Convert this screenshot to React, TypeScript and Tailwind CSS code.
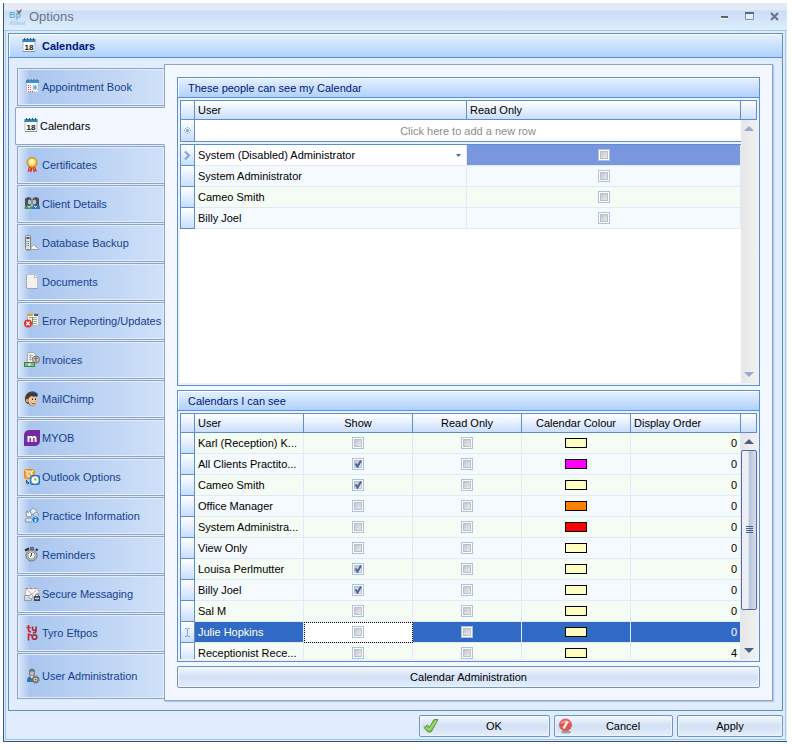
import { useState } from 'react'
import type { ReactNode } from 'react'

const CalendarIcon = () => (
  <svg width="16" height="16" viewBox="0 0 16 16" className="shrink-0">
    <rect x="1" y="1.500" width="12" height="12" rx="1" fill="#fafafa" stroke="#b9bcc2" />
    <rect x=".5" y="1" width="13" height="3" fill="#2d86c6" />
    <path d="M2.500 0v2M5.500 0v2M8.500 0v2M11.500 0v2" stroke="#4b4b50" />
    <text x="7" y="11.500" textAnchor="middle" fontSize="8" fontWeight="700" fontFamily="Liberation Sans, sans-serif" fill="#111">18</text>
    <path d="M1 13.500h12" stroke="#8b8e94" />
  </svg>
)

const AppointmentIcon = () => (
  <svg width="16" height="16" viewBox="0 0 16 16" className="shrink-0">
    <rect x="2.500" y="1.500" width="12" height="12" rx="1" fill="#f4f7fb" stroke="#b5bfce" />
    <rect x="2" y="1" width="13" height="3" fill="#3a92cf" />
    <path d="M4 0v2M7 0v2M10 0v2M13 0v2" stroke="#5a6470" />
    <path d="M4 6.500h1M4 8.500h1M4 10.500h1M6 12.500h1M8 12.500h1" stroke="#d23535" />
    <path d="M6 6.500h1M6 8.500h1M6 10.500h1M4 12.500h1" stroke="#e06b6b" />
    <path d="M9 6.500h5M9 10.500h5M10 12.500h4" stroke="#b4c4da" strokeDasharray="1 1" />
    <circle cx="11" cy="8.500" r="2" fill="#6aaee6" />
  </svg>
)

const CertificateIcon = () => (
  <svg width="16" height="16" viewBox="0 0 16 16" className="shrink-0">
    <path d="M5 9 3.500 15l2.500-1 1 2 1.500-5 1.500 5 1-2 2 1L11 9z" fill="#d8322b" />
    <path d="m6 11-.5 2M10 11l.5 2" stroke="#f58a7a" />
    <circle cx="8" cy="5.500" r="5" fill="#f3b21d" stroke="#c98a1c" />
    <circle cx="8" cy="5" r="3.500" fill="#fde68a" />
    <circle cx="7.500" cy="4.500" r="1.800" fill="#fff7cf" />
  </svg>
)

const ClientsIcon = () => (
  <svg width="16" height="16" viewBox="0 0 16 16" className="shrink-0">
    <path d="M.5 13c0-4 2-5 4-5s3.500 1 3.500 5z" fill="#3d9c5a" />
    <path d="M8 13c0-4 1.500-5 4-5s4 1 4 5z" fill="#2778bd" />
    <path d="M1 3c1-2.500 6-2.500 6.500 0v4c0 4-6.500 5-6.500 1z" fill="#4b4e52" />
    <path d="M8.500 3c1-2.500 6-2.500 6.500 0v5c-.5 4-6.500 3-6.500-1z" fill="#4b4e52" />
    <ellipse cx="5.500" cy="6" rx="1.700" ry="2.500" fill="#b9c4ca" />
    <ellipse cx="10.500" cy="6" rx="1.700" ry="2.500" fill="#b9c4ca" />
    <path d="m3.500 9.500 1.500 2 1.500-2M10 9.500l1.500 2 1.500-2" stroke="#e9f3f7" fill="none" />
  </svg>
)

const BackupIcon = () => (
  <svg width="16" height="16" viewBox="0 0 16 16" className="shrink-0">
    <path d="M7 11.500h6l1.500 2.500v.5H7z" fill="#f3f3f3" stroke="#9b9fa6" />
    <path d="m7 12.500 3-3 2 3" fill="#fff" stroke="#a5a7aa" />
    <rect x="1.500" y=".5" width="5" height="14" rx="1" fill="#e1e2dd" stroke="#7f827e" />
    <path d="M2.500 3h3" stroke="#555" strokeWidth="2" />
    <path d="M2.500 6.500h3M2.500 8.500h3M2.500 10.500h3" stroke="#767a77" strokeDasharray="1 .5" />
    <path d="M2 15h5" stroke="#8d8f90" />
  </svg>
)

const DocumentIcon = () => (
  <svg width="16" height="16" viewBox="0 0 16 16" className="shrink-0">
    <path d="M2.500.5h8l3 3v11h-11z" fill="#f1f1ef" stroke="#c3c4c6" />
    <path d="M10.500.5v3h3" fill="#fff" stroke="#b4b6b8" />
    <path d="M2.500 1v13" stroke="#8a8c90" strokeDasharray="1 1" />
    <path d="M3 14.500h11" stroke="#a2a4a7" />
  </svg>
)

const ErrorIcon = () => (
  <svg width="16" height="16" viewBox="0 0 16 16" className="shrink-0">
    <rect x="3.500" y=".5" width="11" height="12" fill="#f8f6ee" stroke="#bdb9ac" />
    <path d="M4 2h5" stroke="#e79a3c" strokeWidth="2" />
    <path d="M10 2h4" stroke="#355e8f" strokeWidth="2" />
    <path d="M5 4.500h8M9 6.500h4M9 8.500h4M9 10.500h4" stroke="#a6a8a6" />
    <path d="M8.500 4v8" stroke="#5b9a58" />
    <circle cx="4" cy="10.500" r="4" fill="#d8372f" />
    <path d="m2.300 8.800 3.400 3.400M5.700 8.800l-3.400 3.400" stroke="#fff" strokeWidth="1.300" />
  </svg>
)

const InvoiceIcon = () => (
  <svg width="16" height="16" viewBox="0 0 16 16" className="shrink-0">
    <path d="M3.500.5h6l2 2v9h-8z" fill="#f5f5f3" stroke="#a9abae" />
    <path d="M5 3.500h4M5 5.500h4M5 7.500h4M6.500 2v7" stroke="#b1b3b5" />
    <circle cx="12" cy="7.500" r="3.500" fill="#c6c1bb" stroke="#77716c" />
    <path d="M12 5v5M10.500 6.500h3" stroke="#7b5f5a" />
    <rect x=".5" y="10.500" width="10" height="4" fill="#83bd7e" stroke="#3f8446" />
    <circle cx="5.500" cy="12.500" r="1.200" fill="#e3f3df" />
  </svg>
)

const MailChimpIcon = () => (
  <svg width="16" height="16" viewBox="0 0 16 16" className="shrink-0">
    <path d="M1 8c0-4 3-7.500 7-7.500 3 0 5 2 5 4l-1 8c-1 3.500-5 3.500-7 .5-3 0-4-3-4-5z" fill="#5d3620" />
    <path d="M5 7c1-2 4-2 5-1 2-1 3.500 0 3 2l-.5 4c-1 3.500-5 4-7 1-1.500-2-1.500-4-.5-6z" fill="#efc79b" />
    <path d="M5 3C7-.5 11-.5 14 3l-1 2.500c-3-2-5-2-8 0z" fill="#2d5583" />
    <path d="M4.500 4.500c3-2 6-2 9 .5" stroke="#17202c" fill="none" />
    <circle cx="3.500" cy="9.500" r="1.700" fill="#dca574" />
    <path d="M8.500 7.500V9M11.500 7.500V9" stroke="#26150c" />
    <path d="M7.500 12c2 1.500 3 1 4 0" stroke="#7c4023" fill="none" />
  </svg>
)

const MyobIcon = () => (
  <svg width="16" height="16" viewBox="0 0 16 16" className="shrink-0">
    <path d="M6 0h10v10c0 4-2 6-6 6H0V6c0-4 2-6 6-6z" fill="#762a9f" />
    <text x="8" y="11.500" textAnchor="middle" fontSize="10" fontWeight="700" fontFamily="DejaVu Sans, sans-serif" fill="#fff">m</text>
  </svg>
)

const OutlookIcon = () => (
  <svg width="16" height="16" viewBox="0 0 16 16" className="shrink-0">
    <rect x=".5" y=".5" width="10" height="9" rx="1" fill="#f3a63c" stroke="#e08b1d" />
    <circle cx="5.500" cy="5" r="2.500" fill="#f6b95f" stroke="#fff" />
    <path d="m1 1 3 2.500M10 1 7 3.500" stroke="#fff" />
    <rect x="6.500" y="6.500" width="9" height="9" rx="1" fill="#3f98dd" stroke="#2374b8" />
    <circle cx="11" cy="11" r="3.200" fill="#fbf2c9" stroke="#fff" />
    <path d="M11 9v2h1.500" stroke="#a8833a" fill="none" />
    <path d="M2.500 11v3H5M3.500 12.500 5 14l-1.500 1.500" stroke="#3d444d" fill="none" />
  </svg>
)

const PracticeIcon = () => (
  <svg width="16" height="16" viewBox="0 0 16 16" className="shrink-0">
    <path d="M1 13c1-3 2-3 4-3l5 1v3H2z" fill="#d9e2ec" stroke="#7d92ac" />
    <circle cx="5" cy="6" r="3" fill="#edf2f7" stroke="#8496ad" />
    <circle cx="9.500" cy="3.500" r="3" fill="#e6edf4" stroke="#8496ad" />
    <circle cx="12" cy="7" r="2.500" fill="#d3deea" stroke="#8496ad" />
    <path d="m2 3 3 2M6 9l3-3" stroke="#8598ae" />
    <circle cx="11.500" cy="11.500" r="3.800" fill="#2779cc" stroke="#bcd8f4" />
    <path d="M11.500 9v1M11.500 11v3" stroke="#fff" strokeWidth="1.500" />
  </svg>
)

const ReminderIcon = () => (
  <svg width="16" height="16" viewBox="0 0 16 16" className="shrink-0">
    <path d="M6.500.5h3v2h-3z" fill="#8f9295" stroke="#55585b" />
    <path d="m1 3.500 4-2M12 2l1.500 1.500" stroke="#26282a" strokeWidth="2" />
    <circle cx="7.500" cy="8.500" r="5.500" fill="#c3c6c8" stroke="#6a6d70" />
    <circle cx="7.500" cy="8.500" r="3.700" fill="#eef0f0" stroke="#8f9295" />
    <path d="M7.500 6v2.500L6 9.500" stroke="#3c3e40" fill="none" />
  </svg>
)

const SecureIcon = () => (
  <svg width="16" height="16" viewBox="0 0 16 16" className="shrink-0">
    <rect x="1.500" y="2.500" width="13" height="9" fill="#f5f5f5" stroke="#b4b9c0" />
    <path d="M2 2.500h12" stroke="#df6c61" strokeDasharray="2 2" />
    <path d="m2 3 6 5 6-5" stroke="#b7bbc1" fill="none" />
    <path d="M.5 9.500h5l2 2v3h-7z" fill="#d5dae0" stroke="#929aa5" />
    <circle cx="7" cy="10.500" r="2" fill="#f1f1f1" stroke="#9d9fa4" />
    <path d="M11.500 11V9.500c0-2 3-2 3 0V11" stroke="#44484e" fill="none" />
    <rect x="10.500" y="10.500" width="5" height="4" fill="#61656c" stroke="#3f4349" />
    <path d="M11 12.500h4" stroke="#d9dadd" />
  </svg>
)

const TyroIcon = () => (
  <svg width="16" height="16" viewBox="0 0 16 16" className="shrink-0" fill="none" stroke="#d81f2a" strokeWidth="1.600">
    <path d="M4.500 0v5c0 1.500 1 2 2.500 1.500M2.500 2.500h4" />
    <path d="M8.500 1.500V4c0 2 3.500 2 3.500 0V1.500M12 4v2c0 2-2 2-3 1.500" stroke="#a52b34" />
    <path d="M4.500 15.500v-7c0 2.500 3 0 3 2.500" />
    <circle cx="10.500" cy="12" r="2.300" stroke="#a52b34" />
  </svg>
)

const UserAdminIcon = () => (
  <svg width="16" height="16" viewBox="0 0 16 16" className="shrink-0">
    <path d="M3 14c0-4 1-6 5-6s5 3 5 6z" fill="#2f74ad" />
    <path d="m6 8 2 3 2-3z" fill="#e9eef2" />
    <path d="M5 3c0-3.500 6-3.500 6 0v3c-.5 3-5.500 3-6 0z" fill="#70757b" />
    <path d="M6 4c1-1 3-1 4 0v2c-.5 2-3.500 2-4 0z" fill="#c9b8a6" />
    <circle cx="11.500" cy="11.500" r="2.700" fill="#dcd8cd" stroke="#6d6a63" strokeWidth="1.300" />
    <circle cx="11.500" cy="11.500" r="3.700" fill="none" stroke="#6d6a63" strokeDasharray="1.500 1.400" />
    <circle cx="11.500" cy="11.500" r="1" fill="#6d6a63" />
  </svg>
)

const AppLogo = () => (
  <svg width="16" height="18" viewBox="0 0 16 18" className="shrink-0">
    <text x="0" y="10" fontSize="9" fontWeight="700" fontFamily="Liberation Sans, sans-serif" fill="#6fb2dc">Bp</text>
    <path d="M9 5 7 2l3 1 3-2-1 3-3 3z" fill="#7d726f" />
    <text x="0" y="17" fontSize="6" fontWeight="700" fontFamily="Liberation Sans, sans-serif" fill="#a3cdea">Allied</text>
  </svg>
)

const TickIcon = () => (
  <svg width="16" height="16" viewBox="0 0 16 16" className="shrink-0">
    <path d="M1 9.500 4.500 7 6.500 9.500 11 1.500h4L8 14H5z" fill="#78bb4b" stroke="#5a9a3c" strokeLinejoin="round" />
    <path d="M3 9.500 6.500 12 13 2.500" stroke="#a9db80" fill="none" strokeWidth="1.500" />
  </svg>
)

const CancelIcon = () => (
  <svg width="16" height="16" viewBox="0 0 16 16" className="shrink-0">
    <ellipse cx="8" cy="14" rx="5" ry="1.500" fill="#9aa3b3" />
    <circle cx="7.500" cy="7" r="6" fill="#e05450" stroke="#d9615e" />
    <path d="M2.500 6c1-5 9-5 10 0-3-2-7-1-10 0z" fill="#f19a94" />
    <path d="m5.500 10.500 4-7" stroke="#fff" strokeWidth="2.200" />
  </svg>
)

const TABS = [
  { label: 'Appointment Book', icon: AppointmentIcon },
  { label: 'Calendars', icon: CalendarIcon },
  { label: 'Certificates', icon: CertificateIcon },
  { label: 'Client Details', icon: ClientsIcon },
  { label: 'Database Backup', icon: BackupIcon },
  { label: 'Documents', icon: DocumentIcon },
  { label: 'Error Reporting/Updates', icon: ErrorIcon },
  { label: 'Invoices', icon: InvoiceIcon },
  { label: 'MailChimp', icon: MailChimpIcon },
  { label: 'MYOB', icon: MyobIcon },
  { label: 'Outlook Options', icon: OutlookIcon },
  { label: 'Practice Information', icon: PracticeIcon },
  { label: 'Reminders', icon: ReminderIcon },
  { label: 'Secure Messaging', icon: SecureIcon },
  { label: 'Tyro Eftpos', icon: TyroIcon },
  { label: 'User Administration', icon: UserAdminIcon },
]

const VIEWERS = ['System (Disabled) Administrator', 'System Administrator', 'Cameo Smith', 'Billy Joel']

const CALENDARS = [
  { user: 'Karl (Reception) K...', show: false, colour: 'bg-[#ffffc0]', order: 0 },
  { user: 'All Clients Practito...', show: true, colour: 'bg-[#ff00ff]', order: 0 },
  { user: 'Cameo Smith', show: true, colour: 'bg-[#ffffc0]', order: 0 },
  { user: 'Office Manager', show: false, colour: 'bg-[#ff8000]', order: 0 },
  { user: 'System Administra...', show: false, colour: 'bg-[#ff0000]', order: 0 },
  { user: 'View Only', show: false, colour: 'bg-[#ffffc0]', order: 0 },
  { user: 'Louisa Perlmutter', show: true, colour: 'bg-[#ffffc0]', order: 0 },
  { user: 'Billy Joel', show: true, colour: 'bg-[#ffffc0]', order: 0 },
  { user: 'Sal M', show: false, colour: 'bg-[#ffffc0]', order: 0 },
  { user: 'Julie Hopkins', show: false, colour: 'bg-[#ffffc0]', order: 0, selected: true },
  { user: 'Receptionist Rece...', show: false, colour: 'bg-[#ffffc0]', order: 4 },
]

const HEAD = 'h-5 border-y border-r border-[#5b8fd0] bg-linear-to-b from-white to-[#c9defc] p-0 font-normal'
const INDICATOR = 'border-x border-b border-[#5b8fd0] bg-linear-to-b from-white to-[#c9defc] p-0'
const CELL = 'h-[21px] border-r border-b border-[#e2e9fb] p-0'

const Check = ({ label, checked = false }: { label: string; checked?: boolean }) => (
  <span className="relative mx-auto block size-3">
    <input
      type="checkbox"
      aria-label={label}
      defaultChecked={checked}
      className="peer block size-3 appearance-none border border-[#a9c1e2] bg-linear-to-br from-[#b6bbc4] to-[#f7f7f7] shadow-[inset_0_0_0_1px_#fff,inset_0_0_0_2px_#b9bec7]"
    />
    <svg viewBox="0 0 12 12" className="pointer-events-none absolute inset-0 hidden size-3 peer-checked:block">
      <path d="m3.500 5.500 2 3 3.500-6" fill="none" stroke="#44689c" strokeWidth="2" />
    </svg>
  </span>
)

const Group = ({ title, grow, children }: { title: string; grow?: boolean; children: ReactNode }) => (
  <section className={`flex flex-col border border-[#5b8fd0] bg-[#eaf3ff] ${grow ? 'flex-1' : ''}`}>
    <h2 className="h-5 border-b border-[#5b8fd0] bg-linear-to-b from-[#e6f1ff] to-[#afd1fd] pl-[10px] leading-5 text-[#00157a] shadow-[inset_1px_1px_0_#fff]">{title}</h2>
    <div className="flex flex-1 p-0.5">{children}</div>
  </section>
)

const ScrollBar = ({ active }: { active?: boolean }) => (
  <div className="flex w-4 shrink-0 flex-col">
    <div className="h-5 border-y border-r border-[#5b8fd0] bg-linear-to-b from-white to-[#c9defc]" />
    <div className={`flex flex-1 flex-col bg-linear-to-r from-[#e6e6e8] to-[#f1f1f1] ${active ? 'text-[#4a5f88]' : 'text-[#9ba9cb]'}`}>
      <button type="button" aria-label="Scroll up" className="flex h-[17px] items-center justify-center">
        <svg width="10" height="5" viewBox="0 0 10 5"><path d="M0 5 5 0l5 5z" fill="currentColor" /></svg>
      </button>
      {active && (
        <div className="flex h-40 items-center justify-center rounded-xs border border-[#586c95] bg-linear-to-r from-[#eceff5] from-45% via-[#b5c2d9] via-50% to-[#d5deec]">
          <svg width="7" height="8" viewBox="0 0 7 8"><path d="M0 .5h7M0 2.500h7M0 4.500h7M0 6.500h7" stroke="#4a5f88" /></svg>
        </div>
      )}
      <button type="button" aria-label="Scroll down" className="mt-auto flex h-[17px] items-center justify-center">
        <svg width="10" height="5" viewBox="0 0 10 5"><path d="M0 0h10L5 5z" fill="currentColor" /></svg>
      </button>
    </div>
  </div>
)

const PushButton = ({ icon, className = '', children }: { icon?: ReactNode; className?: string; children: ReactNode }) => (
  <button
    type="button"
    className={`flex h-[22px] items-center rounded-xs border border-[#7394c2] bg-linear-to-b from-[#f3f8fe] from-0% via-[#d3e1f5] via-50% to-[#e4eefb] shadow-[inset_0_0_0_1px_#eef5fe] ${className}`}
  >
    {icon}
    <span className="flex-1 text-center">{children}</span>
  </button>
)

const ViewersGrid = () => (
  <Group title="These people can see my Calendar" grow>
    <div className="flex-1 bg-white">
      <table className="w-full table-fixed border-separate border-spacing-0">
        <colgroup>
          <col className="w-[15px]" />
          <col />
          <col className="w-[274px]" />
        </colgroup>
        <thead>
          <tr>
            <th className={`${HEAD} border-l`} />
            <th className={`${HEAD} pl-[3px] text-left`}>User</th>
            <th className={`${HEAD} pl-[3px] text-left`}>Read Only</th>
          </tr>
        </thead>
        <tbody>
          <tr>
            <td className={`${INDICATOR} h-[22px]`}>
              <svg width="7" height="7" viewBox="0 0 7 7" className="mx-auto"><path d="M3.500 0v7M0 3.500h7M1 1l5 5M6 1 1 6" stroke="#72a4e4" strokeDasharray="1 1" /></svg>
            </td>
            <td colSpan={2} className="border-b border-[#5b8fd0] p-0 text-center text-[#8c8c8c]">
              <button type="button">Click here to add a new row</button>
            </td>
          </tr>
          <tr>
            <td colSpan={3} className="h-[3px] border-b border-[#5b8fd0] bg-[#eaf3ff] p-0" />
          </tr>
          {VIEWERS.map((name, i) => (
            <tr key={name} className={i % 2 ? 'bg-[#f5faff]' : 'bg-[#f5fcf3]'}>
              <td className={INDICATOR}>
                {i === 0 && <svg width="7" height="9" viewBox="0 0 7 9" className="mx-auto"><path d="m1 .5 4 4-4 4" fill="none" stroke="#72a4e4" strokeWidth="2" /></svg>}
              </td>
              <td className={`${CELL} ${i === 0 ? 'bg-white' : 'pl-[3px]'}`}>
                {i === 0 ? (
                  <div className="relative flex items-center">
                    <select aria-label="User" className="w-full appearance-none pl-[3px] leading-4 outline-none">
                      {VIEWERS.map((v) => <option key={v}>{v}</option>)}
                    </select>
                    <svg width="5" height="3" viewBox="0 0 5 3" className="pointer-events-none absolute right-[5px]"><path d="M0 0h5L2.500 3z" fill="#3f6fb5" /></svg>
                  </div>
                ) : name}
              </td>
              <td className={`${CELL} ${i === 0 ? 'bg-[#7a96de]' : ''}`}>
                <Check label={`${name} read only`} />
              </td>
            </tr>
          ))}
        </tbody>
      </table>
    </div>
    <ScrollBar />
  </Group>
)

const CalendarsGrid = () => (
  <Group title="Calendars I can see">
    <div className="h-[246px] flex-1 overflow-hidden bg-white">
      <table className="w-full table-fixed border-separate border-spacing-0">
        <colgroup>
          <col className="w-[15px]" />
          <col />
          <col className="w-[109px]" />
          <col className="w-[109px]" />
          <col className="w-[109px]" />
          <col className="w-[110px]" />
        </colgroup>
        <thead>
          <tr>
            <th className={`${HEAD} border-l`} />
            <th className={`${HEAD} pl-[3px] text-left`}>User</th>
            <th className={`${HEAD} text-center`}>Show</th>
            <th className={`${HEAD} text-center`}>Read Only</th>
            <th className={`${HEAD} text-center`}>Calendar Colour</th>
            <th className={`${HEAD} pl-[3px] text-left`}>Display Order</th>
          </tr>
        </thead>
        <tbody>
          {CALENDARS.map((c, i) => (
            <tr key={c.user} className={c.selected ? 'bg-[#316ac5] text-white' : i % 2 ? 'bg-[#f5faff]' : 'bg-[#f5fcf3]'}>
              <td className={INDICATOR}>
                {c.selected && <svg width="5" height="9" viewBox="0 0 5 9" className="mx-auto"><path d="M0 .5h2M3 .5h2M2.500 1v7M0 8.500h2M3 8.500h2" stroke="#72a4e4" /></svg>}
              </td>
              <td className={`${CELL} pl-[3px] whitespace-nowrap`}>{c.user}</td>
              <td className={`${CELL} ${c.selected ? 'bg-white outline outline-dotted -outline-offset-1 outline-black' : ''}`}>
                <Check label={`Show ${c.user}`} checked={c.show} />
              </td>
              <td className={CELL}><Check label={`${c.user} read only`} /></td>
              <td className={CELL}><span className={`mx-auto block h-[10px] w-[22px] border border-black ${c.colour}`} /></td>
              <td className={`${CELL} pr-[3px] text-right`}>{c.order}</td>
            </tr>
          ))}
        </tbody>
      </table>
    </div>
    <ScrollBar active />
  </Group>
)

export default function App() {
  const [active, setActive] = useState('Calendars')

  return (
    <div className="bg-white pt-[3px] pr-[5px] pb-2 pl-[3px] font-['Liberation_Sans','DejaVu_Sans',sans-serif] text-[11px] leading-[14px] text-black">
      <div className="border-b border-l border-[#2f5486] bg-[#e0edff] pb-px">
        <header className="flex h-7 items-center gap-1 border-b border-[#9cc5f2] bg-linear-to-b from-[#e3e9f5] from-25% via-[#c9ddf6] via-30% to-[#deeefe] pr-2 pl-[5px]">
          <AppLogo />
          <h1 className="flex-1 text-[13px] text-[#6a7483]">Options</h1>
          <div className="flex items-center gap-4">
            <button type="button" aria-label="Minimize">
              <svg width="9" height="9" viewBox="0 0 9 9"><path d="M1 5h7" stroke="#5f636a" strokeWidth="2" /><path d="M1 6.500h7" stroke="#fff" /></svg>
            </button>
            <button type="button" aria-label="Maximize">
              <svg width="9" height="9" viewBox="0 0 9 9"><path d="M.5 2v5.500h8V2" fill="#e8eff9" stroke="#7d90b0" /><path d="M0 1h9" stroke="#5c6a80" strokeWidth="2" /></svg>
            </button>
            <button type="button" aria-label="Close">
              <svg width="9" height="9" viewBox="0 0 9 9"><path d="m1 1 7 7M8 1 1 8" stroke="#6b7686" strokeWidth="2.200" /></svg>
            </button>
          </div>
        </header>

        <div className="ml-px mr-px border-x border-b border-[#a3c5ee] px-0.5 pt-0.5 pb-0.5">
          <main className="border border-[#5b8fd0]">
            <div className="flex h-6 items-center gap-1 border-b border-[#5b8fd0] bg-linear-to-b from-[#e6f1ff] to-[#afd1fd] pl-[13px] shadow-[inset_1px_1px_0_#fff]">
              <CalendarIcon />
              <h2 className="font-bold text-[#00157a]">Calendars</h2>
            </div>

            <div className="flex pt-1.5 pr-[9px] pb-[9px] pl-1.5">
              <nav className="relative z-10 -mr-px flex w-[150px] shrink-0 flex-col gap-px pt-1 pb-0.5">
                {TABS.map(({ label, icon: Icon }) => (
                  <button
                    key={label}
                    type="button"
                    onClick={() => setActive(label)}
                    className={`flex h-[38px] items-center border text-left whitespace-nowrap last:h-[46px] ${
                      active === label
                        ? 'rounded-l-xs border-[#8ea2cb] border-r-[#f3f7ff] bg-[#f3f7ff] pl-2'
                        : 'ml-0.5 gap-0.5 border-[#8ea2cb] bg-linear-to-r from-[#dce8fa] from-0% via-[#aac6ef] via-8% to-[#d0e1f9] pl-1.5 text-[#153f8f] shadow-[inset_0_0_0_1px_#e3edfb]'
                    }`}
                  >
                    <Icon />
                    {label}
                  </button>
                ))}
              </nav>

              <div className="flex min-w-0 flex-1 flex-col gap-1 border border-[#8ea2cb] bg-[#f3f7ff] p-3 shadow-[1px_1px_1px_#b5c6e2]">
                <ViewersGrid />
                <CalendarsGrid />
                <PushButton>Calendar Administration</PushButton>
              </div>
            </div>
          </main>

          <footer className="flex justify-end gap-1 pt-1">
            <PushButton icon={<TickIcon />} className="w-[131px] pl-[3px]">OK</PushButton>
            <PushButton icon={<CancelIcon />} className="w-[119px] pl-[3px]">Cancel</PushButton>
            <PushButton className="w-[106px]">Apply</PushButton>
          </footer>
        </div>
      </div>
    </div>
  )
}
